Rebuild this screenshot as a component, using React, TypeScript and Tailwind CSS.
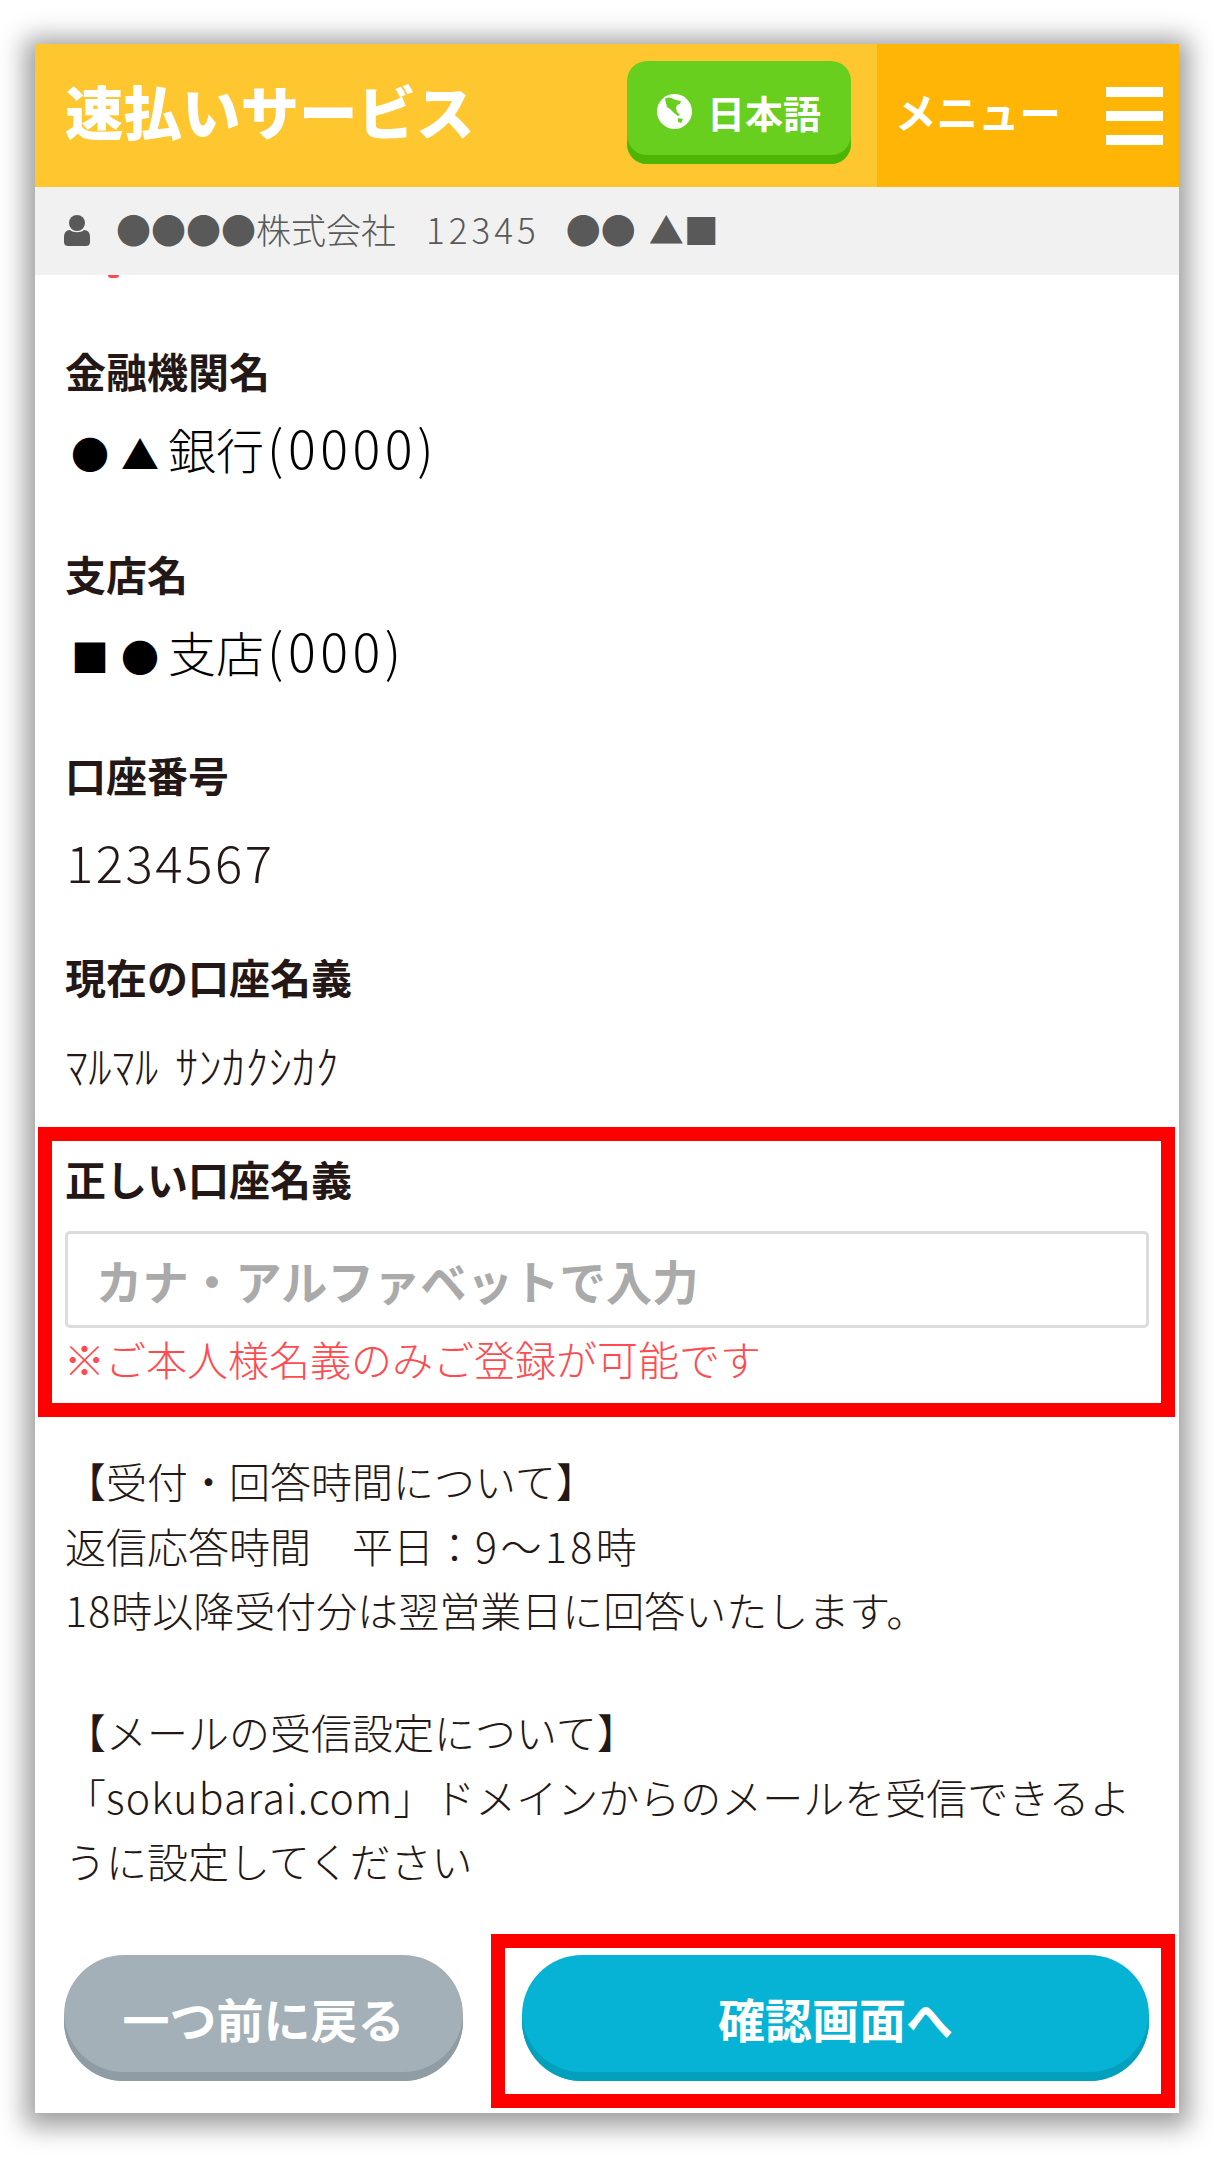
function GlobeIcon() {
  return (
    <svg viewBox="0 0 35 35" className="h-[35px] w-[35px] shrink-0">
      <circle cx="17.5" cy="17.5" r="17.5" fill="#fff" />
      <path
        d="M8 5 C10 3 14 3 16 5 L19 6 L24 7 L23 10 L20 11 L19 14 L20 18 L23 21 L21 22 L17 19 L13 15 L10 13 L9 9 Z"
        fill="#68cf1e"
      />
      <path d="M21 24 L26 25 L24 29 L21 28 Z" fill="#68cf1e" />
    </svg>
  );
}

function UserIcon() {
  return (
    <svg viewBox="0 0 26 31" className="mb-[1px] h-[31px] w-[26px] shrink-0" fill="#595959">
      <circle cx="13" cy="8" r="8" />
      <path d="M6 15 C9 18 17 18 20 15 C24 15 26 18 26 22 L26 27 C26 30 24 31 22 31 L4 31 C2 31 0 30 0 27 L0 22 C0 18 2 15 6 15 Z" />
    </svg>
  );
}

// annotation frame painted over the screenshot
function RedFrame({ className }: { className: string }) {
  return <div className={`pointer-events-none absolute border-[14px] border-[#ff0000] ${className}`} />;
}

function Label({ children }: { children: React.ReactNode }) {
  return <div className="text-[41px] leading-[60px] font-bold text-[#231815]">{children}</div>;
}

function Latin({ children }: { children: React.ReactNode }) {
  return <span className="tracking-[1.2px]">{children}</span>;
}

function Marks({ children }: { children: React.ReactNode }) {
  return <span className="mr-[-3px] ml-[6px] text-[38px] tracking-[12px]">{children}</span>;
}

export default function App() {
  return (
    <div className="h-[2157px] overflow-hidden bg-white pt-[44px] pl-[35px] [font-family:'Noto_Sans_CJK_JP',sans-serif]">
      <div className="w-[1144px] bg-white pb-[32px] shadow-[0_4px_24px_10px_rgba(0,0,0,0.38)]">
        <header className="flex h-[143px]">
          <div className="flex flex-1 items-center justify-between bg-[#ffc72f] pr-[26px] pl-[30px]">
            <div className="-mt-[12px] text-[58.5px] font-black whitespace-nowrap text-white">速払いサービス</div>
            <div className="-mt-[6px] flex h-[103px] w-[224px] items-center gap-[15px] rounded-[20px] bg-[#68cf1e] pb-[3px] pl-[30px] shadow-[inset_0_-9px_0_#4fb504]">
              <GlobeIcon />
              <span className="text-[38px] font-bold text-white">日本語</span>
            </div>
          </div>
          <div className="flex w-[302px] items-center bg-[#ffb505] pr-[16px] pl-[18px]">
            <span className="mb-2 text-[41.5px] font-bold whitespace-nowrap text-white">メニュー</span>
            <div className="ml-auto flex w-[57px] flex-col gap-[14px]">
              <div className="h-[10px] bg-white" />
              <div className="h-[10px] bg-white" />
              <div className="h-[10px] bg-white" />
            </div>
          </div>
        </header>

        <div className="flex h-[88px] items-center gap-[26px] bg-[#f1f1f1] pl-[29px] text-[35px] font-light whitespace-nowrap text-[#595959]">
          <UserIcon />
          <span className="mb-[3px]">
            ●●●●株式会社
            <span className="ml-[30px] tracking-[4px]">12345</span>
            <span className="ml-[26px]">●●</span>
            <span className="ml-[13px]">▲■</span>
          </span>
        </div>

        <main className="px-[30px]">
          <div className="ml-[43px] h-[3px] w-[11px] rounded-b-full bg-[#ff4a50]" />

          <div className="mt-[62px]">
            <Label>金融機関名</Label>
            <div className="mt-[17px] mb-[65.5px] h-[60px] text-[48px] leading-[60px] font-light whitespace-nowrap text-black">
              <Marks>●▲</Marks>銀行<span className="ml-[3px] text-[52px] tracking-[4.5px]">(0000)</span>
            </div>
          </div>
          <div>
            <Label>支店名</Label>
            <div className="mt-[17px] mb-[64.5px] h-[60px] text-[48px] leading-[60px] font-light whitespace-nowrap text-black">
              <Marks>■●</Marks>支店<span className="ml-[3px] text-[52px] tracking-[4.5px]">(000)</span>
            </div>
          </div>
          <div>
            <Label>口座番号</Label>
            <div className="mt-[27px] mb-[54.5px] ml-[1px] h-[60px] text-[51px] leading-[60px] font-light tracking-[2.5px] text-[#231815]">1234567</div>
          </div>
          <div>
            <Label>現在の口座名義</Label>
            <div className="mt-[28px] mb-[54.5px] h-[60px] text-[46px] leading-[60px] font-light tracking-[0.4px] text-[#231815] [word-spacing:6px]">ﾏﾙﾏﾙ ｻﾝｶｸｼｶｸ</div>
          </div>

          <section className="relative">
            <RedFrame className="-top-[21px] -right-[26px] -bottom-[29px] -left-[27px]" />
            <Label>正しい口座名義</Label>
            <input
              placeholder="カナ・アルファベットで入力"
              className="mt-[23px] block h-[97px] w-full rounded-[5px] border-[3px] border-[#dcdcdc] bg-white pl-[28px] text-[46.4px] font-bold outline-none placeholder:text-[#aaaaaa]"
            />
            <div className="-ml-[1px] text-[41px] leading-[60px] font-light text-[#ff4a50]">※ご本人様名義のみご登録が可能です</div>
          </section>

          <div className="mt-[60px] text-[41px] leading-[64.5px] font-light whitespace-nowrap text-[#231815]">
            <p>【受付・回答時間について】</p>
            <p>
              返信応答時間　平日：<span className="tracking-[3.5px]">9〜18</span>時
            </p>
            <p>
              <Latin>18</Latin>時以降受付分は翌営業日に回答いたします。
            </p>
            <p className="mt-[57.5px]">【メールの受信設定について】</p>
            <p>
              「<Latin>sokubarai.com</Latin>」ドメインからのメールを受信できるよ
            </p>
            <p>うに設定してください</p>
          </div>

          <div className="mt-[62px] flex justify-between">
            <button className="h-[126px] w-[399px] -translate-x-px rounded-[60px] bg-[#a3b0b7] pt-[2px] text-[47px] font-bold text-white shadow-[inset_0_-9px_0_#8f9ca3]">
              一つ前に戻る
            </button>
            <div className="relative">
              <RedFrame className="-top-[21px] -right-[26px] -bottom-[27px] -left-[31px]" />
              <button className="block h-[126px] w-[627px] rounded-[60px] bg-[#06b3d4] pt-[2px] text-[47px] font-bold text-white shadow-[inset_0_-9px_0_#02a0bd]">
                確認画面へ
              </button>
            </div>
          </div>
        </main>
      </div>
    </div>
  );
}
